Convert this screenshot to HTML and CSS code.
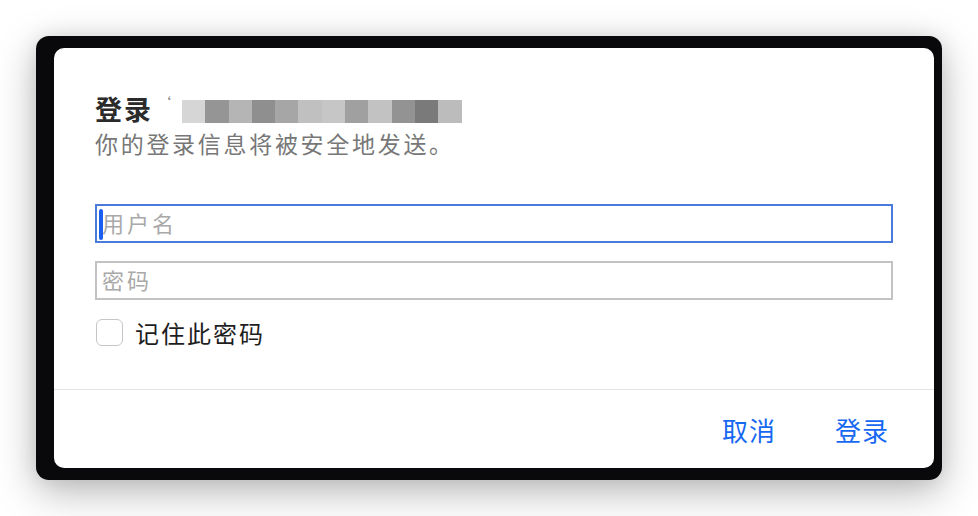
FILE: index.html
```html
<!DOCTYPE html>
<html lang="zh-CN">
<head>
<meta charset="utf-8">
<title>登录</title>
<link rel="stylesheet" href="styles.css">
</head>
<body>
<div class="stage">
  <div class="frame">
    <div class="dialog">
      <div class="content">
        <div class="title-row">
          <span class="title">登录</span>
          <span class="quote">‘</span>
          <span class="mosaic">
            <i class="m1"></i><i class="m2"></i><i class="m3"></i><i class="m4"></i><i class="m5"></i><i class="m6"></i><i class="m7"></i><i class="m8"></i><i class="m9"></i><i class="m10"></i><i class="m11"></i><i class="m12"></i>
          </span>
        </div>
        <div class="subtitle">你的登录信息将被安全地发送。</div>
        <div class="field focused"><span class="caret"></span><span class="placeholder">用户名</span></div>
        <div class="field"><span class="placeholder">密码</span></div>
        <label class="remember"><span class="checkbox"></span><span class="remember-text">记住此密码</span></label>
      </div>
      <div class="footer">
        <span class="btn">取消</span>
        <span class="btn">登录</span>
      </div>
    </div>
  </div>
</div>
</body>
</html>
```
FILE: styles.css
```css
html, body {
  margin: 0;
  padding: 0;
  background: #ffffff;
}
body {
  font-family: "Noto Sans CJK SC", "Noto Sans", sans-serif;
  width: 978px;
  height: 516px;
  overflow: hidden;
}
.stage {
  padding: 36px 0 0 36px;
}
.frame {
  width: 906px;
  height: 444px;
  box-sizing: border-box;
  background: #09090b;
  border-radius: 13px;
  padding: 12px 8px 12px 18px;
  box-shadow: 0 12px 40px rgba(0, 0, 0, 0.28), 0 0 20px rgba(0, 0, 0, 0.08);
}
.dialog {
  width: 880px;
  height: 420px;
  background: #ffffff;
  border-radius: 10px;
  display: flex;
  flex-direction: column;
  overflow: hidden;
}
.content {
  height: 342px;
  padding: 0 41px 0 41px;
  border-bottom: 1px solid #e3e3e3;
  box-sizing: border-box;
  display: flex;
  flex-direction: column;
}
.title-row {
  margin-top: 42px;
  height: 36px;
  display: flex;
  align-items: center;
}
.title {
  font-size: 27px;
  font-weight: 700;
  color: #2b2b2b;
  letter-spacing: 2px;
}
.quote {
  font-size: 14px;
  color: #777;
  margin-left: 4px;
  align-self: flex-start;
  margin-top: 2px;
}
.mosaic {
  display: flex;
  margin-left: 11px;
  height: 23px;
  margin-top: 7px;
}
.mosaic i {
  display: block;
  width: 23.3px;
  height: 23px;
}
.m1 { background: #d6d6d6; }
.m2 { background: #959595; }
.m3 { background: #b5b5b5; }
.m4 { background: #8f8f8f; }
.m5 { background: #a6a6a6; }
.m6 { background: #c0c0c0; }
.m7 { background: #c6c6c6; }
.m8 { background: #a0a0a0; }
.m9 { background: #c2c2c2; }
.m10 { background: #939393; }
.m11 { background: #7a7a7a; }
.m12 { background: #bcbcbc; }
.subtitle {
  margin-top: 1px;
  font-size: 23px;
  color: #777777;
  letter-spacing: 2.7px;
  line-height: 32px;
}
.field {
  margin-top: 45px;
  height: 39px;
  box-sizing: border-box;
  border: 2px solid #c3c3c3;
  display: flex;
  align-items: center;
  padding: 0 0 4px 5px;
  position: relative;
}
.field + .field {
  margin-top: 18px;
}
.field.focused {
  border-color: #4a7bdc;
}
.caret {
  position: absolute;
  left: 2px;
  top: 3px;
  width: 4px;
  height: 31px;
  border-radius: 2px;
  background: #1a5ff0;
}
.placeholder {
  font-size: 22px;
  line-height: 30px;
  color: #a9a9a9;
  letter-spacing: 3px;
}
.remember {
  margin-top: 19px;
  height: 27px;
  display: flex;
  align-items: center;
}
.checkbox {
  width: 27px;
  height: 27px;
  box-sizing: border-box;
  border: 1px solid #c6c6c6;
  border-radius: 6px;
  margin-left: 1px;
  background: #fff;
}
.remember-text {
  margin-left: 12px;
  font-size: 24px;
  line-height: 27px;
  color: #1e1e1e;
  letter-spacing: 2px;
}
.footer {
  flex: 1;
  display: flex;
  justify-content: flex-end;
  align-items: center;
  gap: 59px;
  padding-right: 45px;
}
.btn {
  font-size: 26px;
  color: #1668f2;
  letter-spacing: 1px;
}
```
